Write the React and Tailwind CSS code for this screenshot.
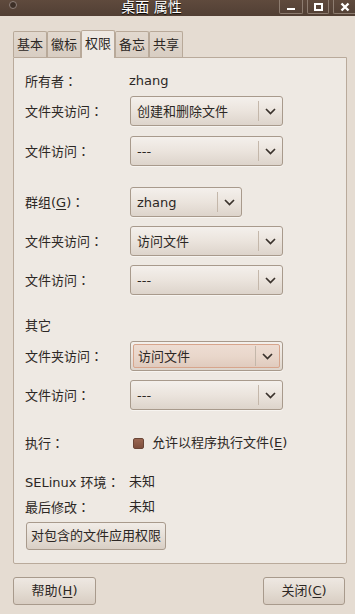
import React from 'react';

const font = "font-['DejaVu_Sans','Noto_Sans_CJK_SC',sans-serif]";

function Chevron() {
  return (
    <svg width="11" height="7" viewBox="0 0 11 7" className="block">
      <polyline points="1,1 5.5,5.5 10,1" fill="none" stroke="#3a322c" strokeWidth="1.7" />
    </svg>
  );
}

function Combo({ text, width, focused }) {
  return (
    <div
      className={`flex h-[30px] rounded-[3px] border border-[#a89a8c] bg-gradient-to-b from-[#f4f0ec] via-[#ebe4dd] to-[#ddd4cb] shadow-[0_1px_0_#f7f4f0] ${focused ? 'p-[2px]' : ''}`}
      style={{ width }}
    >
      <div
        className={`flex flex-1 items-center ${focused ? 'rounded-[2px] border border-[#d7a58c] bg-gradient-to-b from-[#eddcd2] via-[#e9d7cb] to-[#e0cbbe] pl-[4px]' : 'pl-[6px]'}`}
      >
        <span className="flex-1 text-[13px] text-[#2c2724] leading-none">{text}</span>
        <div className="flex h-[20px] w-[24px] items-center justify-center border-l border-[#c4b7aa]">
          <Chevron />
        </div>
      </div>
    </div>
  );
}

function Colon() {
  return <span className="font-['Noto_Sans_CJK_TC',sans-serif]">：</span>;
}

function Row({ label, children, className = '' }) {
  return (
    <div className={`flex items-center ${className}`}>
      <div className="w-[116px] shrink-0 whitespace-nowrap pl-[11px] text-[13px] text-[#2c2724]">
        {label}
        <Colon />
      </div>
      {children}
    </div>
  );
}

function U({ children }) {
  return <span className="underline underline-offset-2">{children}</span>;
}

export default function App() {
  const tabs = ['基本', '徽标', '权限', '备忘', '共享'];
  return (
    <div className={`${font} flex h-[614px] w-[355px] flex-col bg-[#e5dcd2] text-[#2c2724]`}>
      {/* title bar */}
      <div className="flex h-[16px] items-start bg-gradient-to-b from-[#5f4a3d] to-[#513f34]">
        <div className="ml-[9px] mt-[1px] h-[8px] w-[8px] rounded-full border border-[#8f8079] bg-[#3d2f27]" />
        <div className="flex-1 text-center text-[14px] leading-[15px] text-white [text-shadow:0_1px_1px_#000]">
          <span className="ml-[7px]">桌面 属性</span>
        </div>
        <div className="flex gap-[4px]">
          <div className="flex h-[14px] w-[24px] items-end justify-center rounded-b-[2px] border border-t-0 border-[#8d7c70] pb-[3px]">
            <div className="h-[2px] w-[8px] bg-white" />
          </div>
          <div className="flex h-[14px] w-[22px] items-center justify-center rounded-b-[2px] border border-t-0 border-[#8d7c70]">
            <div className="h-[8px] w-[9px] border-2 border-white" />
          </div>
          <div className="flex h-[14px] w-[22px] items-center justify-center rounded-bl-[2px] border border-t-0 border-r-0 border-[#8d7c70]">
            <svg width="10" height="10" viewBox="0 0 10 10">
              <path d="M1.5 1.5 L8.5 8.5 M8.5 1.5 L1.5 8.5" stroke="white" strokeWidth="2.4" />
            </svg>
          </div>
        </div>
      </div>

      {/* tabs */}
      <div className="relative z-10 -mb-px ml-[13px] mt-[14px] flex h-[28px] items-end">
        {tabs.map((t, i) =>
          i === 2 ? (
            <div
              key={t}
              className="flex h-[28px] w-[34px] items-center justify-center rounded-t-[2px] border border-b-0 border-[#b8a999] bg-[#eee9e3] pb-[1px] text-[13px]"
            >
              {t}
            </div>
          ) : (
            <div
              key={t}
              className="mb-px flex h-[26px] w-[34px] items-center justify-center rounded-t-[2px] border border-b-0 border-[#b8a999] bg-gradient-to-b from-[#e2d9cf] to-[#d8cdc2] text-[13px]"
            >
              {t}
            </div>
          )
        )}
      </div>

      {/* panel */}
      <div className="ml-[13px] flex w-[334px] flex-col rounded-b-[2px] border border-[#b9aa9b] bg-[#eee9e3] pb-[13px]">
        <Row label="所有者" className="mt-[13px] h-[20px]">
          <span className="-ml-px text-[13px]">zhang</span>
        </Row>
        <Row label="文件夹访问" className="mt-[5px]">
          <Combo text="创建和删除文件" width={153} />
        </Row>
        <Row label="文件访问" className="mt-[10px]">
          <Combo text="---" width={153} />
        </Row>

        <Row label={<>群组(<U>G</U>)</>} className="mt-[21px]">
          <Combo text="zhang" width={112} />
        </Row>
        <Row label="文件夹访问" className="mt-[9px]">
          <Combo text="访问文件" width={153} />
        </Row>
        <Row label="文件访问" className="mt-[9px]">
          <Combo text="---" width={153} />
        </Row>

        <div className="mt-[21px] flex h-[20px] items-center pl-[11px] text-[13px]">其它</div>
        <Row label="文件夹访问" className="mt-[5px]">
          <Combo text="访问文件" width={153} focused />
        </Row>
        <Row label="文件访问" className="mt-[9px]">
          <Combo text="---" width={153} />
        </Row>

        <Row label="执行" className="mt-[23px] h-[20px]">
          <div className="ml-[3px] h-[11px] w-[11px] rounded-[2px] border border-[#6a4536] bg-gradient-to-b from-[#9a6651] to-[#7d4e3c]" />
          <span className="ml-[8px] text-[13px]">
            允许以程序执行文件(<U>E</U>)
          </span>
        </Row>

        <Row label="SELinux 环境" className="mt-[19px] h-[20px]">
          <span className="-ml-px text-[13px]">未知</span>
        </Row>
        <Row label="最后修改" className="mt-[5px] h-[20px]">
          <span className="-ml-px text-[13px]">未知</span>
        </Row>
        <div className="mt-[5px] pl-[12px]">
          <div className="flex h-[28px] w-[140px] items-center justify-center rounded-[3px] border border-[#a89a8c] bg-gradient-to-b from-[#f1ece7] via-[#e6dfd7] to-[#d9cfc5] text-[13px]">
            对包含的文件应用权限
          </div>
        </div>
      </div>

      {/* bottom buttons */}
      <div className="mt-[13px] flex justify-between pl-[13px] pr-[10px]">
        <div className="flex h-[28px] w-[83px] items-center justify-center rounded-[3px] border border-[#a89a8c] bg-gradient-to-b from-[#eee8e2] via-[#e4dcd3] to-[#d8cdc2] text-[13px]">
          帮助(<U>H</U>)
        </div>
        <div className="flex h-[28px] w-[82px] items-center justify-center rounded-[3px] border border-[#a89a8c] bg-gradient-to-b from-[#eee8e2] via-[#e4dcd3] to-[#d8cdc2] text-[13px]">
          关闭(<U>C</U>)
        </div>
      </div>
    </div>
  );
}
